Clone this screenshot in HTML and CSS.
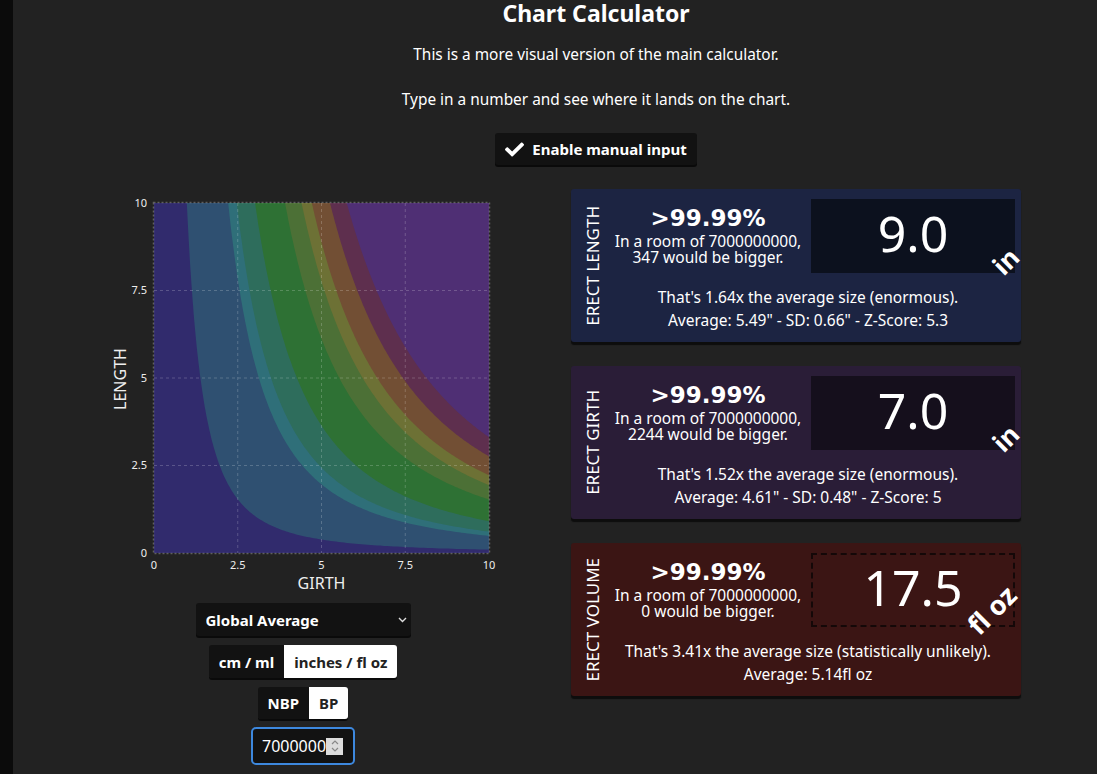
FILE: index.html
```html
<!DOCTYPE html>
<html lang="en">
<head>
    <meta charset="UTF-8">
    <meta name="viewport" content="width=device-width, initial-scale=1.0">
    <title>Chart Calculator</title>
    <link rel="stylesheet" href="styles.css">
</head>
<body>
    <div class="page">
        <div class="header">
            <h1>Chart Calculator</h1>
            <p class="intro">This is a more visual version of the main calculator.</p>
            <p class="intro">Type in a number and see where it lands on the chart.</p>
            <div class="actions">
                <button class="manual-btn" id="manual-btn">
                    <svg class="check" width="19" height="19" viewBox="0 0 512 512"><path fill="#fff" d="M173.898 439.404l-166.4-166.4c-9.997-9.997-9.997-26.206 0-36.204l36.203-36.204c9.997-9.998 26.207-9.998 36.204 0L192 312.69 432.095 72.596c9.997-9.997 26.207-9.997 36.204 0l36.203 36.204c9.997 9.997 9.997 26.206 0 36.204l-294.4 294.401c-9.998 9.997-26.207 9.997-36.204-.001z"/></svg>
                    Enable manual input
                </button>
            </div>
        </div>

        <div class="columns">
            <div class="chart-col">
                <svg id="chart" width="410" height="400" viewBox="0 0 410 400"></svg>

                <div class="controls">
                    <div class="select-wrap">
                        <select class="region-select">
                            <option>Global Average</option>
                        </select>
                        <svg class="select-arrow" width="9" height="6" viewBox="0 0 9 6"><polyline points="1,1 4.5,4.5 8,1" fill="none" stroke="#ddd" stroke-width="1.4"/></svg>
                    </div>

                    <div class="toggle">
                        <span>cm / ml</span>
                        <span class="active">inches / fl oz</span>
                    </div>
                    <div class="toggle small">
                        <span>NBP</span>
                        <span class="active">BP</span>
                    </div>

                    <div class="number-field">
                        <input type="text" value="7000000000">
                        <span class="spinner">
                            <svg width="10" height="14" viewBox="0 0 10 14"><polyline points="2,5 5,2 8,5" fill="none" stroke="#888" stroke-width="1.2"/><polyline points="2,9 5,12 8,9" fill="none" stroke="#888" stroke-width="1.2"/></svg>
                        </span>
                    </div>
                </div>
            </div>

            <div class="cards">
                <div class="card length">
                    <div class="card-side"><span>ERECT LENGTH</span></div>
                    <div class="card-body">
                        <div class="card-top">
                            <div class="stats">
                                <div class="pct">&gt;99.99%</div>
                                <div class="room">In a room of 7000000000,<br>347 would be bigger.</div>
                            </div>
                            <div class="value-box">9.0<span class="unit unit-in">in</span></div>
                        </div>
                        <div class="details">
                            That's 1.64x the average size (enormous).<br>
                            Average: 5.49" - SD: 0.66" - Z-Score: 5.3
                        </div>
                    </div>
                </div>

                <div class="card girth">
                    <div class="card-side"><span>ERECT GIRTH</span></div>
                    <div class="card-body">
                        <div class="card-top">
                            <div class="stats">
                                <div class="pct">&gt;99.99%</div>
                                <div class="room">In a room of 7000000000,<br>2244 would be bigger.</div>
                            </div>
                            <div class="value-box">7.0<span class="unit unit-in">in</span></div>
                        </div>
                        <div class="details">
                            That's 1.52x the average size (enormous).<br>
                            Average: 4.61" - SD: 0.48" - Z-Score: 5
                        </div>
                    </div>
                </div>

                <div class="card volume">
                    <div class="card-side"><span>ERECT VOLUME</span></div>
                    <div class="card-body">
                        <div class="card-top">
                            <div class="stats">
                                <div class="pct">&gt;99.99%</div>
                                <div class="room">In a room of 7000000000,<br>0 would be bigger.</div>
                            </div>
                            <div class="value-box">17.5<span class="unit unit-floz">fl oz</span></div>
                        </div>
                        <div class="details">
                            That's 3.41x the average size (statistically unlikely).<br>
                            Average: 5.14fl oz
                        </div>
                    </div>
                </div>
            </div>
        </div>
    </div>

    <script>
        const svgNS = 'http://www.w3.org/2000/svg';
        const chart = document.getElementById('chart');

        // plot area inside the svg
        const plotLeft = 54;
        const plotTop = 10;
        const plotWidth = 335;
        const plotHeight = 350;

        const px = g => plotLeft + g / 10 * plotWidth;
        const py = l => plotTop + plotHeight - l / 10 * plotHeight;

        // each band covers everything where length * girth^2 is above k
        const bands = [
            { k: 9.6, color: '#2f5071' },
            { k: 49, color: '#2f6f79' },
            { k: 61, color: '#2e6d5c' },
            { k: 91, color: '#2e7134' },
            { k: 153, color: '#4c7036' },
            { k: 194, color: '#6d7135' },
            { k: 222, color: '#724f34' },
            { k: 276, color: '#5e2f4e' },
            { k: 331, color: '#4f2f74' }
        ];

        function add(tag, attrs, text) {
            const el = document.createElementNS(svgNS, tag);
            for (const name in attrs) {
                el.setAttribute(name, attrs[name]);
            }
            if (text !== undefined) {
                el.textContent = text;
            }
            chart.appendChild(el);
            return el;
        }

        add('rect', { x: plotLeft, y: plotTop, width: plotWidth, height: plotHeight, fill: '#312b6d' });

        bands.forEach(band => {
            const g0 = Math.sqrt(band.k / 10);
            let d = `M${px(g0).toFixed(1)},${py(10)}`;
            const steps = 160;
            for (let i = 1; i <= steps; i++) {
                const t = i / steps;
                const g = g0 * Math.pow(10 / g0, t);
                d += ` L${px(g).toFixed(1)},${py(band.k / (g * g)).toFixed(1)}`;
            }
            d += ` L${px(10)},${py(10)} Z`;
            add('path', { d: d, fill: band.color });
        });

        const ticks = [0, 2.5, 5, 7.5, 10];

        ticks.slice(1, 4).forEach(v => {
            add('line', { x1: px(v), y1: plotTop, x2: px(v), y2: plotTop + plotHeight, class: 'grid' });
            add('line', { x1: plotLeft, y1: py(v), x2: plotLeft + plotWidth, y2: py(v), class: 'grid' });
        });
        add('rect', { x: plotLeft - 0.5, y: plotTop - 0.5, width: plotWidth + 1, height: plotHeight + 1, class: 'frame' });

        ticks.forEach(v => {
            add('text', { x: 47, y: py(v), dy: '0.35em', 'text-anchor': 'end', class: 'tick' }, String(v));
            add('text', { x: px(v), y: 372, dy: '0.35em', 'text-anchor': 'middle', class: 'tick' }, String(v));
        });

        add('text', { x: px(5), y: 396, 'text-anchor': 'middle', class: 'axis-title' }, 'GIRTH');
        add('text', { x: 26, y: 186, 'text-anchor': 'middle', class: 'axis-title', transform: 'rotate(-90 26 186)' }, 'LENGTH');
    </script>
</body>
</html>
```

FILE: styles.css
```css
body {
    margin: 0;
    background-color: #0b0b0b;
    font-family: "Noto Sans", sans-serif;
    color: #fff;
    overflow: hidden;
}
.page {
    margin-left: 13px;
    min-height: 100vh;
    background-color: #222;
    overflow: hidden;
}
.header {
    width: 1166px;
    text-align: center;
}
h1 {
    margin: 0;
    padding-top: 1px;
    font-size: 23px;
    line-height: 25px;
    font-weight: 700;
}
.intro {
    margin: 18px 0 0;
    font-size: 15.4px;
    line-height: 22px;
}
.intro + .intro {
    margin-top: 23px;
}
.actions {
    display: flex;
    justify-content: center;
    margin-top: 22px;
}
.manual-btn {
    display: flex;
    align-items: center;
    gap: 8px;
    height: 32px;
    padding: 0 10px;
    background-color: #121212;
    color: #fff;
    border: none;
    border-radius: 3px;
    box-shadow: 0 2px 0 #0a0a0a;
    font-family: "Noto Sans", sans-serif;
    font-size: 15px;
    font-weight: 700;
    cursor: pointer;
}

.columns {
    display: flex;
    align-items: flex-start;
    gap: 61px;
    padding-left: 87px;
    margin-top: 24px;
}

/* left side: chart and its controls */
.chart-col {
    width: 410px;
}
#chart {
    display: block;
    margin-top: 4px;
}
#chart .grid {
    stroke: rgba(255, 255, 255, 0.2);
    stroke-width: 1;
    stroke-dasharray: 3 3;
}
#chart .frame {
    fill: none;
    stroke: rgba(255, 255, 255, 0.28);
    stroke-width: 1.5;
    stroke-dasharray: 2 2;
}
#chart .tick {
    font-family: "Noto Sans", sans-serif;
    font-size: 11px;
    fill: #eee;
}
#chart .axis-title {
    font-family: "Noto Sans", sans-serif;
    font-size: 16px;
    fill: #eee;
}
.controls {
    display: flex;
    flex-direction: column;
    align-items: center;
    padding-right: 4px;
}
.select-wrap {
    position: relative;
    width: 215px;
    margin-top: 10px;
}
.region-select {
    display: block;
    width: 100%;
    height: 33px;
    appearance: none;
    background-color: #121212;
    color: #fff;
    border: none;
    border-radius: 3px;
    padding: 0 10px;
    box-shadow: 0 2px 0 #0a0a0a;
    font-family: "Noto Sans", sans-serif;
    font-size: 15px;
    font-weight: 700;
}
.select-arrow {
    position: absolute;
    right: 4px;
    top: 14px;
}
.toggle {
    display: flex;
    margin-top: 9px;
    border-radius: 3px;
    overflow: hidden;
    box-shadow: 0 2px 0 #0a0a0a;
}
.toggle span {
    display: flex;
    align-items: center;
    height: 33px;
    padding: 0 10px;
    background-color: #121212;
    font-size: 15px;
    font-weight: 700;
}
.toggle.small span {
    height: 32px;
}
.toggle .active {
    background-color: #fff;
    color: #222;
}
.number-field {
    display: flex;
    align-items: center;
    box-sizing: border-box;
    width: 104px;
    height: 38px;
    margin-top: 8px;
    padding: 0 10px 0 9px;
    background-color: #121212;
    border: 2px solid #3d88de;
    border-radius: 5px;
}
.number-field input {
    flex: 1;
    min-width: 0;
    padding: 0;
    background: transparent;
    border: none;
    outline: none;
    color: #fff;
    font-family: "Noto Sans", sans-serif;
    font-size: 16px;
}
.spinner {
    display: flex;
    align-items: center;
    justify-content: center;
    width: 17px;
    height: 17px;
    background-color: #dcdcdc;
}

/* right side: result cards */
.cards {
    width: 450px;
}
.card {
    display: flex;
    margin-bottom: 24px;
    border-radius: 3px;
    box-shadow: 0 3px 1px #0d0d0d;
}
.card.length {
    background-color: #1c2442;
}
.card.girth {
    background-color: #2a1d37;
}
.card.volume {
    background-color: #3b1514;
}
.card-side {
    width: 42px;
    display: flex;
    align-items: center;
    justify-content: center;
}
.card-side span {
    writing-mode: vertical-rl;
    transform: rotate(180deg);
    white-space: nowrap;
    font-size: 17px;
}
.card-body {
    flex: 1;
    padding: 10px 6px 10px 0;
}
.card-top {
    display: flex;
    gap: 8px;
}
.stats {
    flex: 1;
    padding-top: 4px;
    text-align: center;
}
.pct {
    font-family: "DejaVu Sans", sans-serif;
    font-size: 23px;
    font-weight: 700;
    line-height: 30px;
}
.room {
    font-size: 15.5px;
    line-height: 16px;
}
.value-box {
    position: relative;
    display: flex;
    align-items: center;
    justify-content: center;
    box-sizing: border-box;
    width: 204px;
    height: 74px;
    padding-bottom: 7px;
    font-size: 50px;
    line-height: 1;
}
.length .value-box {
    background-color: #0c111e;
}
.girth .value-box {
    background-color: #150f1c;
}
.volume .value-box {
    border: 2px dashed #140808;
}
.unit {
    position: absolute;
    font-size: 26px;
    font-weight: 700;
    line-height: 26px;
    transform: rotate(-45deg);
    white-space: nowrap;
}
.unit-in {
    right: -3px;
    bottom: -1px;
}
.unit-floz {
    font-size: 27px;
    right: -7px;
    bottom: 2px;
}
.details {
    margin-top: 13px;
    padding-right: 12px;
    text-align: center;
    font-size: 15.5px;
    line-height: 23px;
}
```
